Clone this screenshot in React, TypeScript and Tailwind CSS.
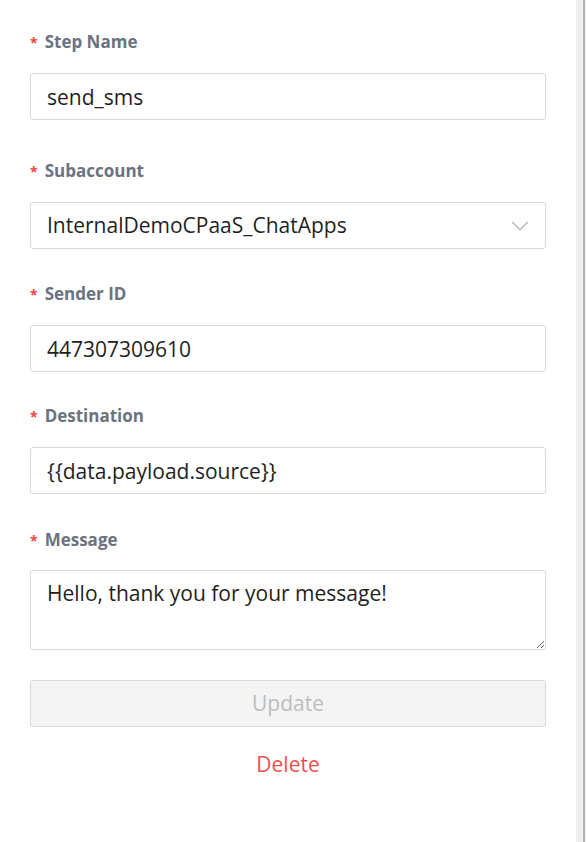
import { ChevronDown } from 'lucide-react'

const font = { fontFamily: '"Open Sans", Lato, sans-serif' }

function Label({ text }: { text: string }) {
  return (
    <div className="flex items-center h-[22px] text-[17px] font-bold text-[#6b7280]">
      <span className="text-[#ef4444] mr-[7px] text-[14px]">*</span>
      {text}
    </div>
  )
}

function TextField({ label, value, className }: { label: string; value: string; className: string }) {
  return (
    <div className={className}>
      <Label text={label} />
      <input
        readOnly
        value={value}
        className="mt-[20px] w-full h-[47px] px-[16px] border border-[#d9d9d9] rounded-[3px] text-[21px] text-[#1f1f1f] outline-none bg-white"
      />
    </div>
  )
}

export default function App() {
  return (
    <div className="flex min-h-[842px] bg-white" style={font}>
      <div className="w-[576px] px-[30px] pt-[31px] flex flex-col">
        <TextField label="Step Name" value="send_sms" className="" />

        <div className="mt-[40px]">
          <Label text="Subaccount" />
          <div className="mt-[20px] w-full h-[47px] pl-[16px] pr-[10px] border border-[#d9d9d9] rounded-[3px] flex items-center justify-between">
            <span className="text-[21px] text-[#1f1f1f]">InternalDemoCPaaS_ChatApps</span>
            <ChevronDown size={30} strokeWidth={0.9} className="text-[#b0b0b0]" />
          </div>
        </div>

        <TextField label="Sender ID" value="447307309610" className="mt-[34px]" />
        <TextField label="Destination" value="{{data.payload.source}}" className="mt-[33px]" />

        <div className="mt-[35px]">
          <Label text="Message" />
          <textarea
            readOnly
            defaultValue="Hello, thank you for your message!"
            className="mt-[19px] block w-full h-[80px] px-[16px] py-[7px] border border-[#d9d9d9] rounded-[3px] text-[21px] leading-[30px] text-[#1f1f1f] outline-none resize-y"
          />
        </div>

        <button className="mt-[30px] w-full h-[47px] bg-[#f4f4f4] border border-[#d9d9d9] rounded-[3px] text-[21px] text-[#bdbdbd]">
          Update
        </button>

        <button className="mt-[22px] self-center text-[21px] leading-[30px] text-[#ef4f4f]">Delete</button>
      </div>

      <div className="w-[7px] bg-[#efefef]" />
      <div className="w-[2px] bg-[#b5b5b5]" />
      <div className="w-[1px] bg-[#efefef]" />
    </div>
  )
}
